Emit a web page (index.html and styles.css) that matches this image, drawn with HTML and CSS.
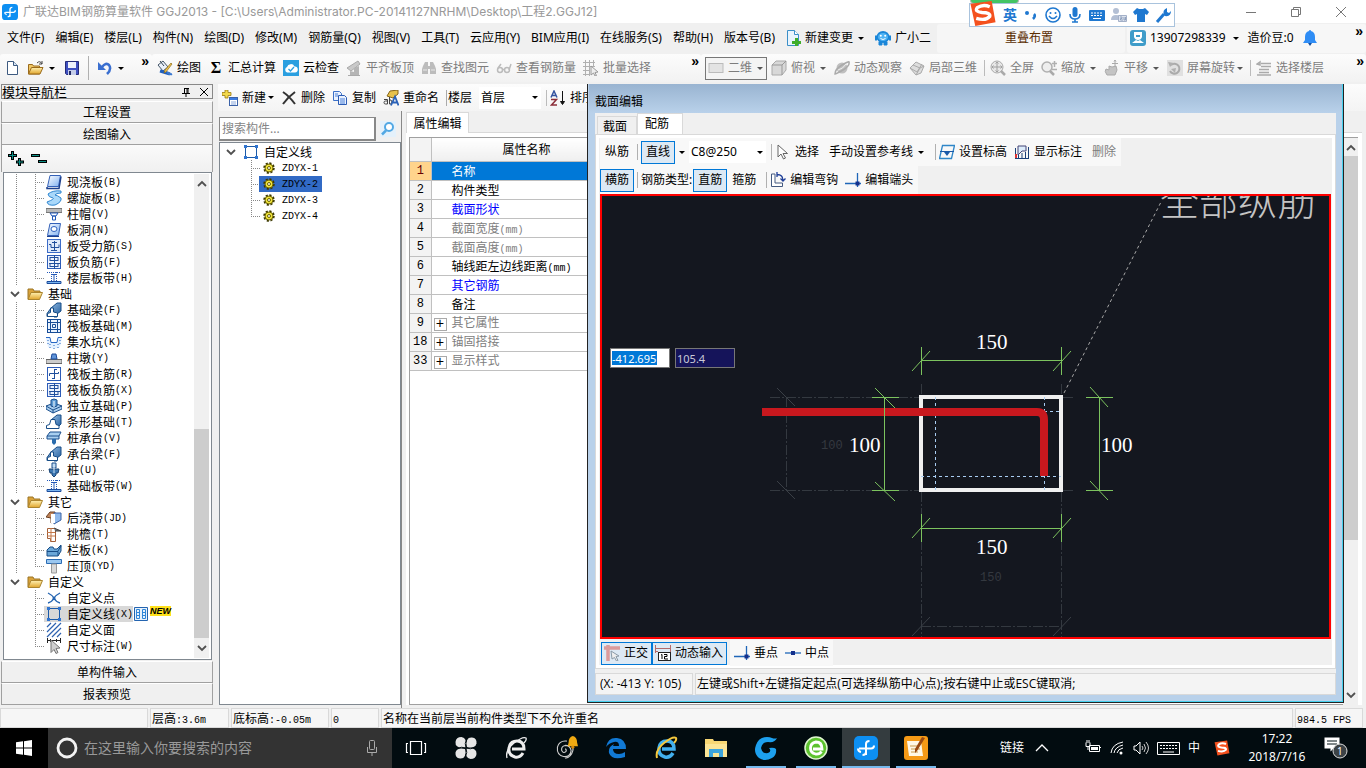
FILE: index.html
```html
<!DOCTYPE html>
<html lang="zh-CN">
<head>
<meta charset="utf-8">
<title>广联达BIM钢筋算量软件 GGJ2013</title>
<link rel="stylesheet" href="styles.css">
</head>
<body>
<svg class="defs" aria-hidden="true">
  <defs>
    <linearGradient id="gb" x1="0" y1="0" x2="1" y2="1"><stop offset="0" stop-color="#fff"/><stop offset="1" stop-color="#7fb0f0"/></linearGradient>
    <linearGradient id="gf" x1="0" y1="0" x2="0" y2="1"><stop offset="0" stop-color="#fff0b0"/><stop offset="1" stop-color="#e0a52c"/></linearGradient>
    <linearGradient id="gs" x1="0" y1="0" x2="1" y2="1"><stop offset="0" stop-color="#9ec4e8"/><stop offset="1" stop-color="#1d5a9c"/></linearGradient>
  </defs>
  <symbol id="app" viewBox="0 0 24 24"><rect width="24" height="24" rx="5" fill="#0d8ff2"/><g fill="none" stroke="#fff" stroke-width="2"><path d="M12 19V8q0-3 3.500-3M5 12.500h12q3 0 3-3M12 16q0 3-3.500 3M4 12.500q0 3 3 3.500"/></g></symbol>
  <symbol id="new" viewBox="0 0 16 16"><path d="M3.500 1.500h6l4 4v9h-10z" fill="#fff" stroke="#3d5a80"/><path d="M9.500 1.500v4h4" fill="#d8e6f6" stroke="#3d5a80"/></symbol>
  <symbol id="open" viewBox="0 0 16 16"><path d="M.5 14V4.500h4l1 1.500h6v8z" fill="#f0c766" stroke="#9a6b1c"/><path d="M.5 14l3-6.500h11.500l-3 6.500z" fill="url(#gf)" stroke="#9a6b1c"/><path d="M9 3q3-3 5 1m0-3v3h-3" fill="none" stroke="#444"/></symbol>
  <symbol id="save" viewBox="0 0 16 16"><path d="M1.500 1.500h13v13h-12l-1-1z" fill="#3e4fc0" stroke="#242b78"/><path d="M4 2h8v6H4z" fill="#eef2fb"/><path d="M4 10h8v5H4z" fill="#c5cde8"/><path d="M5 11h2v4H5z" fill="#222a66"/></symbol>
  <symbol id="undo" viewBox="0 0 16 16"><path d="M5 7q4-5 7-2 3 4-2 9" fill="none" stroke="#3a6fd0" stroke-width="2.500"/><path d="M1 2v8h8z" fill="#3a6fd0"/></symbol>
  <symbol id="draw" viewBox="0 0 16 16"><path d="M1 5l5-4 5 6-5 4z" fill="#eaf0fa" stroke="#456"/><path d="M3 1l4 5" stroke="#345" fill="none"/><path d="M3 11l10 3" stroke="#1f5fbf" stroke-width="3"/><path d="M15 4l-6 8-2 1 1-3 6-7z" fill="#f3c34a" stroke="#8a6a18" stroke-width=".7"/><path d="M10 12q3 3 5 2" stroke="#3b78d0" stroke-width="2" fill="none"/></symbol>
  <symbol id="cloud" viewBox="0 0 16 16"><rect width="16" height="16" fill="#2a9fe0"/><path d="M4 12.500a3 3 0 010-5.500 4 4 0 017.500-.5 3 3 0 01.5 6z" fill="#fff"/><path d="M5.500 9l2 2 3.500-4" fill="none" stroke="#2a9fe0" stroke-width="1.300"/></symbol>
  <symbol id="flat" viewBox="0 0 16 16"><path d="M1 8l11-7 2 3-9 7z" fill="#c9c9c9" stroke="#a9a9a9"/><path d="M4 15v-4l4 1V8l5-2v9z" fill="#b5b5b5"/><path d="M2 15.500h12" stroke="#aaa"/></symbol>
  <symbol id="find" viewBox="0 0 16 16"><g fill="#bcbcbc"><path d="M2 6l2-4h3v12H1V9zM14 6l-2-4H9v12h6V9z"/><path d="M6 6h4v3H6z"/></g><path d="M2 10h4M10 10h4" stroke="#e8e8e8"/></symbol>
  <symbol id="glasses" viewBox="0 0 16 16"><g fill="none" stroke="#bbb" stroke-width="1.500"><circle cx="4" cy="10" r="2.500"/><circle cx="11" cy="10" r="2.500"/><path d="M6.500 9.500h2M2 8l3-4M13 10l2-6"/></g></symbol>
  <symbol id="batch" viewBox="0 0 16 16"><path d="M0 2.500h12M0 6.500h12M0 10.500h7M0 14.500h7M2.500 0v16M6.500 0v16M10.500 0v6" stroke="#b0b0b0" fill="none"/><path d="M8 6l7 6-3 .5 1.500 3-1.500.5-1.500-3L8 15z" fill="#eee" stroke="#999"/></symbol>
  <symbol id="flat2d" viewBox="0 0 16 16"><rect x="1" y="3.500" width="14" height="9" fill="#e3e3e3" stroke="#bbb"/></symbol>
  <symbol id="cube" viewBox="0 0 16 16"><path d="M1 5l4-4h10v9l-4 5H1z" fill="#d8d8d8" stroke="#aaa"/><path d="M1 5h10v10M11 5l4-4" fill="none" stroke="#999"/></symbol>
  <symbol id="orbit" viewBox="0 0 16 16"><circle cx="8" cy="8" r="5.500" fill="#bfbfbf"/><path d="M1 14Q1 9 8 5t7-3q1 4-6 8t-8 4z" fill="none" stroke="#aaa" stroke-width="1.500"/><path d="M4 10q5-1 8-6" stroke="#eee" fill="none"/></symbol>
  <symbol id="part3d" viewBox="0 0 16 16"><path d="M1 8l6-6 8 4-3 7-5 2z" fill="#ddd" stroke="#aaa"/><path d="M4 5l7 3-4 7M11 8l4-2M1 8l7 4 5-8" fill="none" stroke="#aaa"/></symbol>
  <symbol id="full" viewBox="0 0 16 16"><circle cx="7" cy="7" r="6" fill="#e8e8e8" stroke="#aaa"/><path d="M11 11l4 4" stroke="#aaa" stroke-width="2.500"/><path d="M7 2v10M2 7h10M5.500 3.500L7 2l1.500 1.500M5.500 10.500L7 12l1.500-1.500M3.500 5.500L2 7l1.500 1.500M10.500 5.500L12 7l-1.500 1.500" fill="none" stroke="#a0a0a0"/></symbol>
  <symbol id="zoom" viewBox="0 0 16 16"><circle cx="6" cy="7" r="5" fill="#eee" stroke="#b0b0b0" stroke-width="1.500"/><path d="M9 11l4 4" stroke="#aaa" stroke-width="2.500"/><path d="M13.500 1v6M11 3.500h5M11 9.500h5" stroke="#b0b0b0" stroke-width="1.500"/></symbol>
  <symbol id="pan" viewBox="0 0 16 16"><path d="M3 15q-3-4-1-6l3 1V6l3 1 4-1 1 4-2 5z" fill="#c4c4c4" stroke="#aaa"/><path d="M11 0v7M8 3.500h6M10 1.500L11 0l1 1.500" stroke="#aaa" fill="none"/></symbol>
  <symbol id="rot" viewBox="0 0 16 16"><path d="M0 0h16v16H0z" fill="#e0e0e0"/><path d="M4 5a5 5 0 11-1 6" fill="none" stroke="#aaa" stroke-width="2"/><path d="M1 2l6 1-4 4zM4 9l5-1-1 5z" fill="#b0b0b0"/></symbol>
  <symbol id="floor" viewBox="0 0 16 16"><path d="M5 3.500h10M5 6.500h10M1 4l3-2v3zM3 9.500h10M3 12.500h10M1 15h14" fill="none" stroke="#aaa" stroke-width="1.500"/></symbol>
  <symbol id="change" viewBox="0 0 16 16"><path d="M2.500.5h7l4 4v11h-11z" fill="#e9f4fd" stroke="#3b8fc8"/><path d="M9.500.5v4h4" fill="#fff" stroke="#3b8fc8"/><path d="M10 8h3v3h3v3h-3v2h-3v-2H7v-3h3z" fill="#3fae2a"/></symbol>
  <symbol id="robot" viewBox="0 0 16 16"><ellipse cx="8" cy="7" rx="6.500" ry="6" fill="#1b86d8"/><path d="M0 6h2v4H0zM14 6h2v4h-2zM4 12h3v3H4zM9 12h3v3H9z" fill="#1b86d8" stroke="#1b86d8"/><ellipse cx="8" cy="7" rx="5" ry="4" fill="#50b4f4"/><path d="M5.500 8.500q2.500 2 5 0" fill="none" stroke="#fff"/><circle cx="5.800" cy="5.800" r="1" fill="#fff"/><circle cx="10.200" cy="5.800" r="1" fill="#fff"/></symbol>
  <symbol id="user" viewBox="0 0 16 16"><rect width="16" height="16" rx="3" fill="#3f9cc9"/><path d="M4 2h8v5q-1 3-4 3T4 7z" fill="#fff"/><path d="M2 13l4-3 2 1 2-1 4 3z" fill="#fff"/><path d="M6 5h4v2H6z" fill="#3f9cc9"/></symbol>
  <symbol id="bell" viewBox="0 0 16 16"><path d="M8 0q1 0 1 1 4 1 4 6v3l2 3H1l2-3V7q0-5 4-6 0-1 1-1z" fill="#2f8df5"/><path d="M6 13h4l-2 3z" fill="#154f9e"/></symbol>
  <symbol id="addnew" viewBox="0 0 16 16"><path d="M3 0h3v2.500h3v3H6V8H3V5.500H0v-3h3z" fill="#f3d94c" stroke="#9a7a10" stroke-width=".8"/><rect x="7.500" y="7.500" width="8" height="8" fill="#fff" stroke="#3b62a8"/><path d="M8 8h7v2H8z" fill="#3d7be0"/><path d="M9 12h5M9 14h5" stroke="#8aa8dc"/></symbol>
  <symbol id="del" viewBox="0 0 16 16"><path d="M2 2q6 4 12 12M14 2Q7 7 2 14" fill="none" stroke="#333" stroke-width="2"/></symbol>
  <symbol id="copy" viewBox="0 0 16 16"><path d="M1.500 1.500h6l2 2v7h-8z" fill="#eaf2ff" stroke="#3b70c8"/><path d="M6.500 5.500h6l2 2v7h-8z" fill="#eaf2ff" stroke="#2c5cb4"/><path d="M8 9h5M8 11h5M8 13h5M3 4h3M3 6h3" stroke="#4a80d8"/></symbol>
  <symbol id="lens" viewBox="0 0 16 16"><rect width="16" height="16" fill="#e4f1fb"/><circle cx="9" cy="6" r="4" fill="#fff" stroke="#52a8e4" stroke-width="2"/><path d="M6 9.500L2 13.500" stroke="#52a8e4" stroke-width="2.500"/></symbol>
  <symbol id="pin" viewBox="0 0 10 10"><path d="M3 1.500h5M3.500 1v5M7 1v5M6 1v5M1 6.500h8M5 7v3" stroke="#000" fill="none"/></symbol>
  <symbol id="x" viewBox="0 0 10 10"><path d="M1 1l8 8M9 1L1 9" stroke="#000" fill="none"/></symbol>
  <symbol id="chev" viewBox="0 0 10 10"><path d="M1 3l4 4 4-4" stroke="#505050" stroke-width="1.800" fill="none"/></symbol>
  <symbol id="folder" viewBox="0 0 16 16"><path d="M1 13V3h5l1 2h6v3" fill="#d9a23a" stroke="#9b7424"/><path d="M1 13.500L4 6.500h11.500l-3 7z" fill="url(#gf)" stroke="#ab842e"/></symbol>
  <symbol id="slab" viewBox="0 0 16 16"><path d="M4 1.500h10.500l-2 11H1.500z" fill="url(#gb)" stroke="#3461b8"/><path d="M1 13v1.500h12l2-12" fill="none" stroke="#1c3f8c" stroke-width="1.500"/></symbol>
  <symbol id="spiral" viewBox="0 0 16 16"><path d="M15 1Q7 0 2 4q0 3 5 4 2 1-6 4 1 4 8 3 7-3 6-7-4-3-6-3 1-2 6-2z" fill="#a9d8fa" stroke="#2f86d0"/></symbol>
  <symbol id="cap" viewBox="0 0 16 16"><path d="M0 2.500h16v4H0z" fill="#bbb" stroke="#777"/><path d="M4 7l2 3h4l2-3zM6.500 10h3v4h-3z" fill="#fff" stroke="#2258b8"/></symbol>
  <symbol id="hole" viewBox="0 0 16 16"><path d="M4 1.500h10.500l-2 12H1.500z" fill="url(#gb)" stroke="#3461b8"/><ellipse cx="8" cy="7" rx="3" ry="2.500" fill="#fff" stroke="#2f62c0"/><path d="M1 14.500h12" stroke="#1c3f8c"/></symbol>
  <symbol id="rebar" viewBox="0 0 16 16"><rect x="1.500" y="1.500" width="13" height="13" fill="#dfeafb" stroke="#3c6cc8"/><path d="M8.500 3v10M3 6.500h2v3h8v-3M5 12.500h6M6 4.500h5" fill="none" stroke="#204f9c"/></symbol>
  <symbol id="negbar" viewBox="0 0 16 16"><rect x="1.500" y="1.500" width="13" height="13" fill="#eef4ff" stroke="#2c5cb8"/><path d="M8.500 1v14M4 3.500h8M4 6.500h8M4 3v4M12 3v4M3 9.500h11M4 12.500h8M4 9v4M12 9v4" fill="none" stroke="#204f9c"/></symbol>
  <symbol id="strip" viewBox="0 0 16 16"><path d="M1 2.500h14M5.500 2v10M10.500 2v10" stroke="#2258b8" stroke-dasharray="1 1"/><path d="M8 4v8M6 4.500h4" stroke="#2258b8" fill="none"/><path d="M1 11.500h14v2H1z" fill="#78b4f0" stroke="#1c4c9c"/></symbol>
  <symbol id="beam" viewBox="0 0 16 16"><path d="M1 14.500v-3L5 6l6-5h4v8l-4 3v3H8v-4H6v3z" fill="url(#gs)" stroke="#174c86"/><path d="M1.500 14.500v-3l3-1V6h3v4l4 1v3.500z" fill="#fff" stroke="#174c86"/></symbol>
  <symbol id="raft" viewBox="0 0 16 16"><rect x="1.500" y="1.500" width="13" height="13" fill="#e9f3ff" stroke="#174c96"/><path d="M1 4.500h14M1 11.500h14M4.500 1v14M11.500 1v14M6.500 6.500h3v3h-3z" stroke="#174c96" fill="none"/></symbol>
  <symbol id="pit" viewBox="0 0 16 16"><path d="M0 4h4l1 5h6l1-5h4l-2 9q-6 3-12 0z" fill="#e4f1ff"/><path d="M0 3.500h4l1 5h6l1-5h4" fill="none" stroke="#2767c4"/><path d="M2 6v6M4 10v4M8 11v4M12 10v4M14 6v6" stroke="#2767c4" stroke-dasharray="1 2"/></symbol>
  <symbol id="pier" viewBox="0 0 16 16"><path d="M0 9.500h16v4H0z" fill="#ccc" stroke="#666"/><path d="M5 9l1-5h4l1 5z" fill="#5f93d8" stroke="#1c4a98"/></symbol>
  <symbol id="mainbar" viewBox="0 0 16 16"><rect x="1.500" y="1.500" width="13" height="13" fill="#fff" stroke="#2c5cb8"/><path d="M8.500 3v10M8 3.500h3M3.500 10V7.500h9V6M6 12.500h3" fill="none" stroke="#204f9c"/></symbol>
  <symbol id="iso" viewBox="0 0 16 16"><path d="M0 8l8-3 8 3v3l-9 4-7-4z" fill="#a9cdee" stroke="#1b4f8c"/><path d="M0 8l7 4 9-4M7 12v3" fill="none" stroke="#1b4f8c"/><path d="M5 8V2l3-1 3 1v6L8 9z" fill="#5d9bd4" stroke="#1b4f8c"/><path d="M8 3v6" stroke="#fff"/></symbol>
  <symbol id="stripf" viewBox="0 0 16 16"><path d="M5 6l6-5h4v9l-4 4" fill="url(#gs)" stroke="#174c86"/><path d="M.5 14.500v-3l3-1L5 5.500h4l1 5 3 1v3z" fill="#fff" stroke="#174c86"/></symbol>
  <symbol id="pilecap" viewBox="0 0 16 16"><path d="M1 6l3-4h11l-2 4v3H1z" fill="#a8cff0" stroke="#1b4f8c"/><path d="M1 6h12" stroke="#1b4f8c"/><path d="M6 9h4v4l-2 2-2-2z" fill="#2b6cac"/></symbol>
  <symbol id="pile" viewBox="0 0 16 16"><path d="M6 1h4v5H6z" fill="#c3dcf2" stroke="#1b4f8c"/><path d="M3 7h3l2 1 2-1h3l-1 4h-2v2l-2 2-2-2v-2H4z" fill="#3f7ab4" stroke="#174274"/><path d="M8 4v7" stroke="#cfe4f8"/></symbol>
  <symbol id="post" viewBox="0 0 16 16"><path d="M0 7l4-5h5v8l-4 3v-5z" fill="#c08458" stroke="#6b3f22"/><path d="M8 3h7v7l-7 4z" fill="#8fb9ec" stroke="#3a62a4"/><path d="M5 4h4v9H5z" fill="#fff"/></symbol>
  <symbol id="eave" viewBox="0 0 16 16"><path d="M1.500 2.500h8v13h-5v-3h-3z" fill="#fff" stroke="#a35f38"/><path d="M1 6.500h8M1 10h8M5 2v13" stroke="#c47848"/><path d="M8 2l7 3H9" fill="#777" stroke="#444"/></symbol>
  <symbol id="rail" viewBox="0 0 16 16"><path d="M1 8l3-3h3l1 2h3l4-4v6l-3 5H1z" fill="#6ba7d8" stroke="#174c86"/><path d="M1 9.500h11v4M12 9l3-5" fill="none" stroke="#174c86"/></symbol>
  <symbol id="coping" viewBox="0 0 16 16"><path d="M.5 1.500h15v4H.5z" fill="#9ac7f0" stroke="#2b6cb4"/><path d="M5.500 6h5v9h-5z" fill="#d9d9d9" stroke="#999"/></symbol>
  <symbol id="cpoint" viewBox="0 0 16 16"><path d="M2 3q4 2 6 5-2 4-6 5M14 3q-4 2-6 5 2 4 6 5" fill="none" stroke="#2464b0" stroke-width="1.300"/><circle cx="8" cy="8" r="1.500" fill="#2464b0"/></symbol>
  <symbol id="cline" viewBox="0 0 16 16"><rect x="2.500" y="2.500" width="11" height="11" fill="none" stroke="#1b5aa8"/><path d="M1 1h3v3H1zM12 1h3v3h-3zM1 12h3v3H1zM12 12h3v3h-3z" fill="#2f74d0"/></symbol>
  <symbol id="cface" viewBox="0 0 16 16"><path d="M1 5l4-4M1 10l9-9M1 15L15 1M6 15l9-9M11 15l4-4" stroke="#2d62b0" stroke-width="1.200"/></symbol>
  <symbol id="cdim" viewBox="0 0 16 16"><path d="M1.500 0v5M14.500 0v5M1 2.500h14M4.500 1v3M10.500 1v3" stroke="#222" fill="none"/><path d="M5 2l9 8-4 .5 2 4-2 1-2-4-3 3z" fill="#d0d0d0" stroke="#777"/></symbol>
  <symbol id="gear" viewBox="0 0 12 12"><circle cx="6" cy="6" r="4.500" fill="none" stroke="#3c3800" stroke-width="2.500" stroke-dasharray="2 1.500"/><circle cx="6" cy="6" r="4" fill="#f0e43c" stroke="#6b6200"/><circle cx="6" cy="6" r="1.500" fill="#fff" stroke="#6b6200"/></symbol>
  <symbol id="cursor" viewBox="0 0 16 16"><path d="M3 1v12l3-3 2.500 5 2-1L8 9.500h4.500z" fill="#fff" stroke="#666"/></symbol>
  <symbol id="level" viewBox="0 0 16 16"><path d="M3.500 1.500h12l-3 13h-12z" fill="none" stroke="#2f86c8" stroke-width="1.300"/><path d="M1 7.500h14" stroke="#1b5aa8"/><path d="M5 8h6l-3 4z" fill="#1b5aa8"/></symbol>
  <symbol id="mark" viewBox="0 0 16 16"><path d="M1.500 15V4M4.500 15V6M14.500 15V3M11.500 15V8M8 15V9M1 14.500h14" stroke="#1b3f78" fill="none"/><path d="M4 2h8v5H8l-4 4z" fill="#dcecfb" stroke="#447"/><path d="M1 10h2v4H1z" fill="#d33"/></symbol>
  <symbol id="hook" viewBox="0 0 16 16"><path d="M5 2H1.500v12.500h11V11H5z" fill="#fff" stroke="#445a80"/><path d="M7 2.500q6 0 6 6M10.500 6.500L13 9l2.500-2.500M7 0v5" fill="none" stroke="#1f3f98" stroke-width="1.300"/></symbol>
  <symbol id="end" viewBox="0 0 16 16"><path d="M0 11.500h16M12.500 1v14" stroke="#1f66b8" stroke-width="1.300"/><path d="M10.500 9.500h4v4h-4z" fill="#14308c"/></symbol>
  <symbol id="mid" viewBox="0 0 16 16"><path d="M0 8h16" stroke="#1f66b8" stroke-width="1.300"/><path d="M6 6h4v4H6z" fill="#14308c"/></symbol>
  <symbol id="ortho" viewBox="0 0 16 16"><path d="M0 3h16M4 0v16" stroke="#db9b9b" stroke-width="3.500"/><path d="M7 6l8 5-3 .5 2 4-1.500.5-2-3.500L8 14z" fill="#eee" stroke="#8a9aa8"/></symbol>
  <symbol id="sogou" viewBox="0 0 28 28"><path d="M1 4l22-3 4 22-21 4z" fill="#f4511e"/><path d="M21 7Q14 4 8 8q-3 4 5 5 9 0 8 4-4 5-14 2" fill="none" stroke="#fff" stroke-width="3.500"/></symbol>
</svg>

<header class="titlebar">
  <svg class="i16"><use href="#app"/></svg>
  <h1>广联达BIM钢筋算量软件 GGJ2013 - [C:\Users\Administrator.PC-20141127NRHM\Desktop\工程2.GGJ12]</h1>
  <div class="winbtns">
    <button aria-label="最小化"><svg class="i10"><path d="M0 5.500h10" stroke="#777"/></svg></button>
    <button aria-label="还原"><svg class="i10"><path d="M.5 2.500h7v7h-7zM2.500 2V.5h7v7H8" fill="none" stroke="#777"/></svg></button>
    <button aria-label="关闭"><svg class="i10"><path d="M0 0l10 10M10 0L0 10" stroke="#777"/></svg></button>
  </div>
</header>

<nav class="menubar">
  <div class="menus">
    <button>文件(F)</button><button>编辑(E)</button><button>楼层(L)</button><button>构件(N)</button><button>绘图(D)</button><button>修改(M)</button><button>钢筋量(Q)</button><button>视图(V)</button><button>工具(T)</button><button>云应用(Y)</button><button>BIM应用(I)</button><button>在线服务(S)</button><button>帮助(H)</button><button>版本号(B)</button>
    <button class="tb"><svg class="i16"><use href="#change"/></svg>新建变更<i class="dd"></i></button>
    <button class="tb"><svg class="i16"><use href="#robot"/></svg>广小二</button>
  </div>
  <button class="overlap">重叠布置</button>
  <div class="account">
    <button class="tb"><svg class="i16"><use href="#user"/></svg>13907298339<i class="dd"></i></button>
    <span>造价豆:0</span>
    <svg class="i16"><use href="#bell"/></svg>
    <button class="more" aria-label="更多">»</button>
  </div>
</nav>

<div class="toolbar">
  <div class="band file">
    <button aria-label="新建"><svg class="i16"><use href="#new"/></svg></button>
    <button class="tb" aria-label="打开"><svg class="i16"><use href="#open"/></svg><i class="dd"></i></button>
    <button aria-label="保存"><svg class="i16"><use href="#save"/></svg></button>
    <i class="sep"></i>
    <button class="tb" aria-label="撤销"><svg class="i16"><use href="#undo"/></svg><i class="dd"></i></button>
    <button class="more" aria-label="更多">»</button>
  </div>
  <div class="band draw">
    <button class="tb"><svg class="i16"><use href="#draw"/></svg>绘图</button>
    <button class="tb"><b class="sigma">Σ</b>汇总计算</button>
    <button class="tb"><svg class="i16"><use href="#cloud"/></svg>云检查</button>
    <button class="tb off"><svg class="i16"><use href="#flat"/></svg>平齐板顶</button>
    <button class="tb off"><svg class="i16"><use href="#find"/></svg>查找图元</button>
    <button class="tb off"><svg class="i16"><use href="#glasses"/></svg>查看钢筋量</button>
    <button class="tb off"><svg class="i16"><use href="#batch"/></svg>批量选择</button>
    <button class="more" aria-label="更多">»</button>
  </div>
  <div class="band view">
    <button class="tb off boxed"><svg class="i16"><use href="#flat2d"/></svg>二维<i class="dd"></i></button>
    <button class="tb off"><svg class="i16"><use href="#cube"/></svg>俯视<i class="dd"></i></button>
    <button class="tb off"><svg class="i16"><use href="#orbit"/></svg>动态观察</button>
    <button class="tb off"><svg class="i16"><use href="#part3d"/></svg>局部三维</button>
    <button class="tb off line"><svg class="i16"><use href="#full"/></svg>全屏</button>
    <button class="tb off"><svg class="i16"><use href="#zoom"/></svg>缩放<i class="dd"></i></button>
    <button class="tb off"><svg class="i16"><use href="#pan"/></svg>平移<i class="dd"></i></button>
    <button class="tb off"><svg class="i16"><use href="#rot"/></svg>屏幕旋转<i class="dd near"></i></button>
    <button class="tb off line"><svg class="i16"><use href="#floor"/></svg>选择楼层</button>
    <button class="more" aria-label="更多">»</button>
  </div>
</div>

<main class="work">
  <aside class="nav song">
    <div class="navhead"><h2>模块导航栏</h2><button aria-label="固定"><svg class="i10"><use href="#pin"/></svg></button><button aria-label="关闭"><svg class="i10"><use href="#x"/></svg></button></div>
    <button class="wide">工程设置</button>
    <button class="wide">绘图输入</button>
    <div class="expand">
      <button aria-label="全部展开"><svg class="i16"><path d="M4.500 0v9M0 4.500h9M11.500 7v8M8 11h8" stroke="#000" stroke-width="3"/><path d="M4.500 1v7M1 4.500h7M11.500 8v6M9 11h6" stroke="#0a8f86"/></svg></button>
      <button aria-label="全部折叠"><svg class="i16"><path d="M0 4.500h9M7 10.500h9" stroke="#000" stroke-width="3"/><path d="M1 4.500h7M8 10.500h7" stroke="#0a8f86"/></svg></button>
    </div>
    <div class="tree">
      <ul>
        <li class="leaf"><svg class="i16"><use href="#slab"/></svg>现浇板<s>(B)</s></li>
        <li class="leaf"><svg class="i16"><use href="#spiral"/></svg>螺旋板<s>(B)</s></li>
        <li class="leaf"><svg class="i16"><use href="#cap"/></svg>柱帽<s>(V)</s></li>
        <li class="leaf"><svg class="i16"><use href="#hole"/></svg>板洞<s>(N)</s></li>
        <li class="leaf"><svg class="i16"><use href="#rebar"/></svg>板受力筋<s>(S)</s></li>
        <li class="leaf"><svg class="i16"><use href="#negbar"/></svg>板负筋<s>(F)</s></li>
        <li class="leaf last"><svg class="i16"><use href="#strip"/></svg>楼层板带<s>(H)</s></li>
        <li class="group"><svg class="i10"><use href="#chev"/></svg><svg class="i16"><use href="#folder"/></svg>基础</li>
        <li class="leaf"><svg class="i16"><use href="#beam"/></svg>基础梁<s>(F)</s></li>
        <li class="leaf"><svg class="i16"><use href="#raft"/></svg>筏板基础<s>(M)</s></li>
        <li class="leaf"><svg class="i16"><use href="#pit"/></svg>集水坑<s>(K)</s></li>
        <li class="leaf"><svg class="i16"><use href="#pier"/></svg>柱墩<s>(Y)</s></li>
        <li class="leaf"><svg class="i16"><use href="#mainbar"/></svg>筏板主筋<s>(R)</s></li>
        <li class="leaf"><svg class="i16"><use href="#negbar"/></svg>筏板负筋<s>(X)</s></li>
        <li class="leaf"><svg class="i16"><use href="#iso"/></svg>独立基础<s>(P)</s></li>
        <li class="leaf"><svg class="i16"><use href="#stripf"/></svg>条形基础<s>(T)</s></li>
        <li class="leaf"><svg class="i16"><use href="#pilecap"/></svg>桩承台<s>(V)</s></li>
        <li class="leaf"><svg class="i16"><use href="#beam"/></svg>承台梁<s>(F)</s></li>
        <li class="leaf"><svg class="i16"><use href="#pile"/></svg>桩<s>(U)</s></li>
        <li class="leaf last"><svg class="i16"><use href="#strip"/></svg>基础板带<s>(W)</s></li>
        <li class="group"><svg class="i10"><use href="#chev"/></svg><svg class="i16"><use href="#folder"/></svg>其它</li>
        <li class="leaf"><svg class="i16"><use href="#post"/></svg>后浇带<s>(JD)</s></li>
        <li class="leaf"><svg class="i16"><use href="#eave"/></svg>挑檐<s>(T)</s></li>
        <li class="leaf"><svg class="i16"><use href="#rail"/></svg>栏板<s>(K)</s></li>
        <li class="leaf last"><svg class="i16"><use href="#coping"/></svg>压顶<s>(YD)</s></li>
        <li class="group"><svg class="i10"><use href="#chev"/></svg><svg class="i16"><use href="#folder"/></svg>自定义</li>
        <li class="leaf tail"><svg class="i16"><use href="#cpoint"/></svg>自定义点</li>
        <li class="leaf tail"><span class="hot"><svg class="i16"><use href="#cline"/></svg>自定义线<s>(X)</s></span><svg class="i16"><path d="M1.500 1.500h13v13h-13z" fill="#e8f2fc" stroke="#2464b0"/><path d="M3.500 3.500h3v9h-3zM9.500 3.500h3v9h-3zM3 6.500h4M3 9.500h4M9 6.500h4M9 9.500h4" fill="none" stroke="#2f86d8"/></svg><em>NEW</em></li>
        <li class="leaf tail"><svg class="i16"><use href="#cface"/></svg>自定义面</li>
        <li class="leaf tail last"><svg class="i16"><use href="#cdim"/></svg>尺寸标注<s>(W)</s></li>
      </ul>
      <div class="scroll low"><svg class="i10 up"><use href="#chev"/></svg><i class="thumb"></i><svg class="i10"><use href="#chev"/></svg></div>
    </div>
    <button class="wide">单构件输入</button>
    <button class="wide">报表预览</button>
  </aside>

  <section class="center">
    <div class="parts-bar">
      <button class="tb"><svg class="i16"><use href="#addnew"/></svg>新建<i class="dd near"></i></button>
      <button class="tb"><svg class="i16"><use href="#del"/></svg>删除</button>
      <button class="tb"><svg class="i16"><use href="#copy"/></svg>复制</button>
      <button class="tb"><svg class="i16"><path d="M4 6l3-5 8-1v4l-5 4z" fill="#e8c24c" stroke="#86651a"/><path d="M1 9.500h3.500V14H2.500a1.500 1.500 0 010-3h2M6.500 7v7h1.500q2-2 0-4H6.500" fill="none" stroke="#444"/><path d="M8 15.500l4-9 3.500 9M10 12.500h4" fill="none" stroke="#2b62b8" stroke-width="1.800"/></svg>重命名</button>
      <label class="floor" for="floor">楼层</label>
      <span class="pick"><select id="floor"><option>首层</option></select><i class="dd"></i></span>
      <button class="tb line"><svg class="i16"><path d="M1 7.500L4 1l3 6.500M2 5.500h4" fill="none" stroke="#3454a0" stroke-width="1.500"/><path d="M1 9.500h5.500L1.500 15H7" fill="none" stroke="#8c2f3a" stroke-width="1.500"/><path d="M12.500 1v13M10.500 11.500l2 3 2-3z" fill="#111" stroke="#111"/></svg>排序</button>
    </div>
    <div class="panes">
      <div class="parts">
        <div class="search"><input type="text" aria-label="搜索构件" placeholder="搜索构件..."><button aria-label="搜索"><svg class="i16"><use href="#lens"/></svg></button></div>
        <ul class="partlist song">
          <li class="group"><svg class="i10"><use href="#chev"/></svg><svg class="i16"><use href="#cline"/></svg>自定义线</li>
          <li class="leaf tail"><span class="cell"><svg class="i12"><use href="#gear"/></svg><s>ZDYX-1</s></span></li>
          <li class="leaf tail"><span class="cell sel"><svg class="i12"><use href="#gear"/></svg><s>ZDYX-2</s></span></li>
          <li class="leaf tail"><span class="cell"><svg class="i12"><use href="#gear"/></svg><s>ZDYX-3</s></span></li>
          <li class="leaf tail last"><span class="cell"><svg class="i12"><use href="#gear"/></svg><s>ZDYX-4</s></span></li>
        </ul>
      </div>
      <div class="props song">
        <div class="tabrow"><button class="tab on">属性编辑</button></div>
        <div class="propbody">
          <div class="grid">
            <table>
              <thead><tr><th></th><th>属性名称</th><th></th></tr></thead>
              <tbody>
                <tr class="cur"><th>1</th><td>名称</td><td></td></tr>
                <tr><th>2</th><td>构件类型</td><td></td></tr>
                <tr class="blue"><th>3</th><td>截面形状</td><td></td></tr>
                <tr class="gray"><th>4</th><td>截面宽度<s>(mm)</s></td><td></td></tr>
                <tr class="gray"><th>5</th><td>截面高度<s>(mm)</s></td><td></td></tr>
                <tr><th>6</th><td>轴线距左边线距离<s>(mm)</s></td><td></td></tr>
                <tr class="blue"><th>7</th><td>其它钢筋</td><td></td></tr>
                <tr><th>8</th><td>备注</td><td></td></tr>
                <tr class="gray fold"><th>9</th><td><button>+</button>其它属性</td><td></td></tr>
                <tr class="gray fold"><th>18</th><td><button>+</button>锚固搭接</td><td></td></tr>
                <tr class="gray fold"><th>33</th><td><button>+</button>显示样式</td><td></td></tr>
              </tbody>
            </table>
          </div>
          <div class="scroll high"><svg class="i10 up"><use href="#chev"/></svg><i class="thumb"></i><svg class="i10"><use href="#chev"/></svg></div>
        </div>
      </div>
    </div>
  </section>
</main>

<section class="dialog" role="dialog" aria-label="截面编辑">
  <h2>截面编辑</h2>
  <div class="dlgbody">
    <div class="dlgtabs song"><button>截面</button><button class="on">配筋</button></div>
    <div class="page">
      <div class="row">
        <div class="strip">
          <button class="flatb">纵筋</button><i class="sep"></i>
          <button class="pressed">直线</button><i class="dd"></i>
          <span class="pick bar"><input type="text" aria-label="钢筋规格" value="C8@250"><i class="dd"></i></span>
          <i class="sep"></i>
          <button class="tb"><svg class="i16"><use href="#cursor"/></svg>选择</button>
          <button class="tb wideg">手动设置参考线<i class="dd"></i></button>
          <i class="sep wideg"></i>
          <button class="tb"><svg class="i16"><use href="#level"/></svg>设置标高</button>
          <button class="tb"><svg class="i16"><use href="#mark"/></svg>显示标注</button>
          <button class="tb off wideg">删除</button>
        </div>
      </div>
      <div class="row">
        <div class="strip types">
          <button class="pressed">横筋</button><i class="sep"></i>
          <span>钢筋类型:</span>
          <button class="pressed">直筋</button>
          <button class="flatb">箍筋</button><i class="sep wideg"></i>
          <button class="tb"><svg class="i16"><use href="#hook"/></svg>编辑弯钩</button>
          <button class="tb"><svg class="i16"><use href="#end"/></svg>编辑端头</button>
        </div>
      </div>
      <div class="canvas">
        <svg class="cad" viewBox="602 196 727 441" preserveAspectRatio="xMinYMin slice">
          <text x="1160" y="215" font-size="39" font-weight="300" fill="#c4c4c4" font-family="Noto Sans CJK SC, sans-serif">全部纵筋</text>
          <path d="M1160.500 203L1063 395" stroke="#a8a8a8" stroke-dasharray="3 3" fill="none"/>
          <g stroke="#343940" fill="none" stroke-dasharray="10 2 2 2">
            <path d="M770 397.500h150M770 490.500h150M1063 397.500h12M1063 490.500h12M786.500 397v93"/>
            <path d="M921.500 384v12M1061.500 384v12M921.500 492v145M1061.500 492v145M921 626.500h141"/>
          </g>
          <path d="M777 388l18 18M777 481l18 18M912 636l18-19M1053 636l18-19" stroke="#3a3f46" fill="none"/>
          <text x="821" y="449" class="ghost">100</text>
          <text x="980" y="581" class="ghost">150</text>
          <rect x="921" y="397" width="140" height="93" fill="none" stroke="#f0f0f0" stroke-width="4"/>
          <g stroke="#a9cdf2" stroke-dasharray="3 3" fill="none"><path d="M935.500 397v93M1044.500 397v93M921 476.500h140M1044 411.500h18"/></g>
          <path d="M762 412h275q7 0 7 8v56" fill="none" stroke="#c8181e" stroke-width="8"/>
          <g stroke="#7cc35e" fill="none">
            <path d="M921 360.500h141M921.500 347v28M1061.500 347v28M912 371l18-20M1053 371l18-20"/>
            <path d="M921 528.500h141M921.500 514v28M1061.500 514v28M912 538l18-20M1053 538l18-20"/>
            <path d="M884.500 397v94M872 397.500h27M872 490.500h27M875 388l20 20M875 482l20 19"/>
            <path d="M1099.500 397v94M1086 397.500h27M1086 490.500h27M1090 387l18 20M1090 481l18 19"/>
          </g>
          <g class="dim"><text x="976" y="349">150</text><text x="976" y="554">150</text><text x="849" y="452">100</text><text x="1101" y="452">100</text></g>
        </svg>
        <input class="coord first" aria-label="X" value="-412.695">
        <input class="coord second" aria-label="Y" value="105.4">
      </div>
      <div class="row foot">
        <button class="pressed tb"><svg class="i16"><use href="#ortho"/></svg>正交</button><button class="pressed tb"><svg class="i16"><path d="M.5 0v8M15.500 0v8M1 3.500h14M1 6.500h2" stroke="#b26a6a" fill="none"/><rect x="3.500" y="7.500" width="12" height="8" fill="#fff" stroke="#222"/><path d="M6 10l1-.5V14M9 9.500h3v2H9.500V14H13" stroke="#000" fill="none"/></svg>动态输入</button>
        <div class="strip">
          <button class="tb"><svg class="i16"><use href="#end"/></svg>垂点</button>
          <button class="tb"><svg class="i16"><use href="#mid"/></svg>中点</button>
        </div>
      </div>
    </div>
    <div class="dlgstatus"><span>(X: -413 Y: 105)</span><span>左键或Shift+左键指定起点(可选择纵筋中心点);按右键中止或ESC键取消;</span></div>
  </div>
</section>

<div class="ime">
  <svg class="logo"><use href="#sogou"/></svg>
  <b>英</b>
  <svg class="i16"><circle cx="4" cy="6" r="2" fill="#1f78d0"/><path d="M11 7q2 2-1 5" fill="none" stroke="#1f78d0" stroke-width="2.500"/></svg>
  <svg class="i16"><circle cx="8" cy="8" r="7" fill="none" stroke="#1f78d0" stroke-width="1.600"/><circle cx="5.500" cy="6" r="1" fill="#1f78d0"/><circle cx="10.500" cy="6" r="1" fill="#1f78d0"/><path d="M4 9q4 5 8 0" fill="none" stroke="#1f78d0" stroke-width="1.500"/></svg>
  <svg class="i16"><rect x="5.500" y="0" width="5" height="10" rx="2.500" fill="#1f78d0"/><path d="M3 7q0 5 5 5t5-5M8 12v3M5 15h6" fill="none" stroke="#1f78d0" stroke-width="1.600"/></svg>
  <svg class="i16"><rect x="0" y="3" width="16" height="11" rx="1" fill="#1f78d0"/><path d="M2 6h12M2 8.500h12" stroke="#fff" stroke-dasharray="2 1"/><path d="M4 11.500h8" stroke="#fff"/></svg>
  <svg class="i16"><circle cx="5" cy="4" r="3" fill="#b3bfd4"/><path d="M0 13q0-5 5-5t5 5z" fill="#b3bfd4"/><path d="M7.500 8.500h8v6h-8z" fill="#dde3ee" stroke="#a3b0c8"/><path d="M9 10h2v1.500H9.500V13H12M13 10v3h1.500v-3" fill="none" stroke="#8fa0bd"/></svg>
  <svg class="i16"><path d="M4 1l2 1h4l2-1 4 4-2 3-2-1v8H4V7L2 8 0 5z" fill="#1f78d0"/></svg>
  <svg class="i16"><path d="M2 15l7-8" stroke="#1f78d0" stroke-width="3"/><path d="M9 8Q7 3 12 1v4l2 1 2-2q0 6-6 5z" fill="#1f78d0"/></svg>
</div>
<i class="float" aria-hidden="true"></i>

<footer class="status song"><span></span><span>层高<s>:3.6m</s></span><span>底标高<s>:-0.05m</s></span><span><s>0</s></span><span>名称在当前层当前构件类型下不允许重名</span><span><s>984.5 FPS</s></span></footer>

<div class="taskbar">
  <button class="start" aria-label="开始"><svg class="i16"><path d="M0 2.200L7 1.300v6.200H0zM8 1.200L16 0v7.500H8zM0 8.500h7v6.200l-7-1zM8 8.500h8V16l-8-1.200z" fill="#fff"/></svg></button>
  <label class="cortana"><svg viewBox="0 0 22 22"><circle cx="11" cy="11" r="9" fill="none" stroke="#f2f2f2" stroke-width="2.800"/></svg><input type="text" aria-label="搜索" placeholder="在这里输入你要搜索的内容"><svg class="i16"><rect x="5.500" y=".5" width="5" height="9" rx="1" fill="none" stroke="#aaa"/><path d="M3.500 7v5.500h9V7M8 12v4" fill="none" stroke="#aaa"/></svg></label>
  <div class="apps">
    <button aria-label="任务视图"><svg viewBox="0 0 24 24"><path d="M6.500 5.500h11v13h-11zM4 7.500H2.500v9H4M20 7.500h1.500v9H20" fill="none" stroke="#fff" stroke-width="1.200"/></svg></button>
    <button aria-label="风扇"><svg viewBox="0 0 24 24"><g fill="#e6e6e6"><path d="M12 11.500Q1 13 1.500 6q.5-5 6-5 6 1 4.500 10.500z"/><path d="M13 11Q11 1 18 1.500q5 .5 4.500 6Q21 13 13 11z"/><path d="M12 12.500Q23 11 22.500 18q-.5 5-6 5-6-1-4.500-10.500z"/><path d="M11 13Q13 23 6 22.500q-5-.5-4.500-6Q3 11 11 13z"/></g><path d="M2 13q6-3 10-1t10-1M13 2q-3 6-1 10t-1 10" fill="none" stroke="#020c10"/></svg></button>
    <button aria-label="浏览器"><svg viewBox="0 0 24 24"><path d="M19 17q-3 5-8 4-7-2-6-9 1-7 8-7t7 8H8" fill="none" stroke="#eee" stroke-width="3"/><path d="M3 22q-2-8 7-15T22 2q1 2-2 5" fill="none" stroke="#eee" stroke-width="1.300"/></svg></button>
    <button aria-label="提醒"><svg viewBox="0 0 28 28"><path d="M15 6q-9-1-11 7-1 9 7 11 8 1 9-7-1-6-7-6-5 1-4 6 2 4 5 1 1-2-1-3M18 8q5 4 4 9-2 8-9 9" fill="none" stroke="#ccc" stroke-width="1.300"/><path d="M22 0q5 1 5 8l1 4H16l1-4q0-7 5-8z" fill="#f0aa12"/><circle cx="22" cy="13" r="1.800" fill="#d88b0a"/></svg></button>
    <button aria-label="Edge"><svg viewBox="0 0 24 24"><path d="M2 11Q4 1 13 2q9 1 9 11H9q0 5 6 5 3 0 6-2v5q-13 4-16-4-1-6 5-9-1 2-1 2h6q0-5-5-4-5 1-8 5z" fill="#1179d4"/></svg></button>
    <button aria-label="Internet Explorer"><svg viewBox="0 0 24 24"><path d="M19 17q-3 5-8 4-7-2-6-9 1-7 8-7t7 8H8" fill="none" stroke="#42b0ee" stroke-width="3.500"/><path d="M3 22q-2-8 7-15T22 2q1 2-2 5" fill="none" stroke="#f5c93e" stroke-width="2"/></svg></button>
    <button aria-label="文件资源管理器"><svg viewBox="0 0 24 24"><path d="M1 3h8l1 2h13v16H1z" fill="#f7d774"/><path d="M1 8h22v13H1z" fill="#fbe596"/><path d="M5 13h14v8h-4v-4H9v4H5z" fill="#3ca4dc"/></svg></button>
    <button class="run" aria-label="广联达"><svg viewBox="0 0 24 24"><path d="M23 2q-2 5-9 4-6 0-7 6 1 6 7 5 4-2 1-5 5-1 7 1 1 6-4 9-7 4-13 0Q-1 17 2 9 5 1 13 1q3 0 5 1 3 1 5 0z" fill="#1da0ee"/></svg></button>
    <button class="run" aria-label="360浏览器"><svg viewBox="0 0 24 24"><circle cx="12" cy="12" r="11" fill="#5cc22e" stroke="#dff5d0" stroke-width="1.500"/><path d="M17.500 15.500q-2 3-6 2.500-5-1-5-6 0-5 5.500-6 6 0 6 7H9" fill="none" stroke="#fff" stroke-width="2.800"/></svg></button>
    <button class="run active" aria-label="GGJ2013"><svg><use href="#app"/></svg></button>
    <button class="run" aria-label="笔记"><svg viewBox="0 0 24 24"><rect width="24" height="24" rx="3" fill="#f59a16"/><path d="M3 5h14l2 15H5z" fill="#fff8e6"/><path d="M6 10h9M7 13h9M7 16h7" stroke="#c99a4a"/><path d="M21 2l-8 13-2 2v-4l7-12z" fill="#9a4a12"/></svg></button>
  </div>
  <div class="tray">
    <span>链接</span>
    <svg class="i16"><path d="M2 11l6-6 6 6" fill="none" stroke="#fff" stroke-width="1.300"/></svg>
    <svg class="i16 far"><path d="M4.500 5.500h10v6h-10zM14.500 7.500H16M1 2.500v4h4v-4M2 0v3M4 0v3M3 7v3" fill="none" stroke="#fff"/><path d="M6 7h7v3H6z" fill="#fff"/></svg>
    <svg class="i16"><g fill="none" stroke="#fff"><path d="M2 13Q3 4 14 2M5 13q1-6 9-8M8 13q1-4 6-5"/></g><circle cx="12" cy="13" r="1.500" fill="#fff"/></svg>
    <svg class="i16"><path d="M1 6h2l4-4v12l-4-4H1z" fill="none" stroke="#fff"/><path d="M9 6q2 2 0 4M11 4q3 4 0 8M13 2q5 6 0 12" fill="none" stroke="#ccc"/></svg>
    <svg class="kbd"><path d="M.5 1.500h22v12H.5z" fill="none" stroke="#fff"/><path d="M3 4.500h17M3 7.500h17" stroke="#fff" stroke-dasharray="2 1"/><path d="M6 11h11" stroke="#fff"/></svg>
    <span>中</span>
    <svg class="i16 sg"><use href="#sogou"/></svg>
    <time>17:22<br>2018/7/16</time>
    <svg class="note"><path d="M.5 1.500h15v11h-6l-3 3v-3h-6z" fill="#fff"/><path d="M3 5h10M3 8h10" stroke="#001015"/><circle cx="16" cy="15" r="7" fill="#3c4346" stroke="#ddd"/><text x="13" y="19" font-size="10" fill="#fff">1</text></svg>
  </div>
</div>
</body>
</html>
```

FILE: styles.css
```css
* { box-sizing: border-box; }
body {
  margin: 0; height: 100vh; display: flex; flex-direction: column; overflow: hidden; position: relative;
  background: #f0f0f0; color: #000; font: 12px/16px "Noto Sans", "Noto Sans CJK SC", sans-serif;
}
.defs { position: absolute; width: 0; height: 0; }
button { font: inherit; color: inherit; background: none; border: 0; padding: 0; margin: 0; white-space: nowrap; }
input, select { font: inherit; border: 0; padding: 0; margin: 0; min-width: 0; border-radius: 0; outline: 0; }
ul { list-style: none; margin: 0; padding: 0; }
h1, h2 { margin: 0; font: inherit; }
svg { display: block; flex: none; }
.i16 { width: 16px; height: 16px; }
.i12 { width: 12px; height: 12px; }
.i10 { width: 10px; height: 10px; }
.song { font-family: "Noto Sans CJK SC", sans-serif; }
s { text-decoration: none; font: 10px "Liberation Mono", monospace; }
.tb { display: flex; align-items: center; gap: 4px; }
.off { color: #7d7d7d; }
.dd { flex: none; width: 6px; height: 3px; margin: 0 1px; border: solid transparent; border-width: 3px 3px 0; border-top-color: #000; }
.off .dd { border-top-color: #555; }
.dd.near { margin: 0 0 0 -2px; }
.sep { width: 1px; height: 16px; background: #b0b0b0; flex: none; }
.more { font: bold 14px/12px "Liberation Sans", sans-serif; margin-left: auto; align-self: flex-start; padding-top: 1px; }

/* title bar */
.titlebar { display: flex; align-items: center; gap: 5px; height: 23px; padding-left: 2px; background: #fff; flex: none; }
.titlebar h1 { color: #999; white-space: nowrap; font-family: Inter, "Noto Sans CJK SC", sans-serif; }
.winbtns { margin-left: auto; display: flex; gap: 35px; padding-right: 20px; }

/* menus */
.menubar { height: 30px; flex: none; display: flex; align-items: center; }
.menus { display: flex; align-items: center; gap: 11px; padding-left: 7px; width: 937px; white-space: nowrap; }
.menus .tb { margin-left: -1px; }
.overlap { width: 188px; height: 29px; padding-right: 4px; background: #f6f6f6; color: #5a2d00; border-radius: 3px; }
.account { flex: 1; height: 29px; margin-left: 2px; padding: 0 3px; display: flex; align-items: center; gap: 8px; background: #f7f7f7; border-radius: 3px; white-space: nowrap; }
.account .dd { margin-left: 3px; }

/* toolbars */
.toolbar { display: flex; height: 28px; flex: none; margin-top: 1px; }
.band { display: flex; align-items: center; gap: 7px; padding: 0 2px; background: linear-gradient(#fcfcfc, #f2f2f2); border-radius: 3px; }
.file { width: 152px; padding: 0 3px 0 4px; gap: 8px; }
.file .sep { height: 24px; }
.draw { width: 549px; padding-left: 5px; }
.view { flex: 1; padding-left: 4px; }
.sigma { width: 16px; font: bold 16px/16px "Liberation Serif", serif; text-align: center; }
.boxed { border: 1px solid #777; height: 23px; width: 62px; padding: 0 2px; margin-right: -3px; background: #f4f4f4; }
.boxed .dd { margin-left: auto; }
.line { border-left: 1px solid #bbb; padding-left: 5px; height: 16px; }

.work { flex: 1; min-height: 0; display: flex; gap: 5px; padding-top: 2px; }

/* navigation panel */
.nav { width: 213px; display: flex; flex-direction: column; padding: 0 0 3px 1px; }
.navhead { height: 15px; border: 1px solid #888; display: flex; align-items: center; gap: 8px; padding-right: 3px; margin-bottom: 2px; flex: none; }
.navhead h2 { margin-right: auto; font-size: 13px; line-height: 13px; }
.wide { height: 22px; border: 1px solid #a0a0a0; border-top-color: #fff; flex: none; background: #f0f0f0; }
.expand { height: 27px; flex: none; display: flex; align-items: center; gap: 7px; padding-left: 6px; background: linear-gradient(#fafafa, #f0f0f0); border: 1px solid #a0a0a0; border-width: 0 1px; }
.tree { flex: 1; min-height: 0; display: flex; justify-content: space-between; margin: 0 1px 1px 2px; padding: 1px 2px 1px 0; background: #fff; border: 1px solid #808890; overflow: hidden; }
.tree ul { flex: 1; }
li { display: flex; align-items: center; height: 16px; line-height: 16px; white-space: nowrap; }
.group { padding-left: 6px; gap: 5px; }
.group .i10 { margin-right: 2px; }
.leaf { padding-left: 42px; gap: 5px; background:
  repeating-linear-gradient(90deg, #888 0 1px, transparent 1px 2px) 31px 8px / 10px 1px no-repeat,
  repeating-linear-gradient(#888 0 1px, transparent 1px 2px) 31px 0 / 1px 16px no-repeat,
  repeating-linear-gradient(#888 0 1px, transparent 1px 2px) 12px 0 / 1px 16px no-repeat; }
.leaf.last { background-size: 10px 1px, 1px 8px, 1px 16px; }
.leaf.tail { background-size: 10px 1px, 1px 16px, 0 0; }
.leaf.tail.last { background-size: 10px 1px, 1px 8px, 0 0; }
.leaf s, .hot s { margin-left: -5px; }
.hot { display: flex; align-items: center; gap: 5px; background: #d8d8d8; margin-left: -2px; padding-left: 2px; height: 16px; }
.hot + svg { margin-left: -5px; }
.leaf em { font: italic bold 9px/10px "Liberation Sans", sans-serif; background: #ffe11c; margin: 0 0 6px -4px; }
.scroll { width: 15px; background: #f0f0f0; display: flex; flex-direction: column; align-items: center; padding: 5px 0; flex: none; }
.up { transform: rotate(180deg); }
.thumb { width: 100%; background: #cdcdcd; }
.low .thumb { height: 44%; margin-top: auto; margin-bottom: 5px; }
.high .thumb { height: 69%; margin: 3px 0 auto; }

/* component list and property grid */
.center { flex: 1; min-width: 0; display: flex; flex-direction: column; }
.parts-bar { height: 27px; flex: none; display: flex; align-items: center; gap: 7px; padding-left: 4px; background: linear-gradient(#fcfcfc, #f4f4f4); }
.floor { border-left: 1px solid #aaa; padding-left: 1px; }
.pick { display: flex; align-items: center; background: #fff; height: 22px; width: 62px; padding: 0 2px; }
.pick select, .pick input { flex: 1; width: 0; appearance: none; background: #fff; color: #000; }
.parts-bar .line { margin-left: -2px; padding-left: 3px; }
.panes { flex: 1; min-height: 0; display: flex; gap: 4px; }
.parts { width: 184px; display: flex; flex-direction: column; padding: 4px 0 3px 1px; border-right: 1px solid #888; }
.search { display: flex; align-items: center; gap: 4px; height: 27px; flex: none; }
.search input { height: 24px; width: 157px; border: 2px solid #888; border-width: 1px 2px 2px 1px; padding-left: 2px; background: #fff; }
.search input::placeholder { color: #858585; opacity: 1; }
.partlist { flex: 1; background: #fff; border: 1px solid #808890; padding-top: 1px; }
.partlist .leaf { padding-left: 39px; }
.cell { display: flex; align-items: center; height: 16px; padding: 0 4px; gap: 12px; }
.cell s { margin-left: -5px; }
.sel { background: #316ac5; }
.props { flex: 1; min-width: 0; display: flex; flex-direction: column; padding: 1px 4px 3px 0; }
.tabrow { height: 21px; display: flex; flex: none; border-bottom: 1px solid #d9d9d9; }
.tab { width: 63px; border: 1px solid #d9d9d9; border-bottom: 0; background: #fff; margin-bottom: -1px; }
.propbody { flex: 1; min-height: 0; display: flex; padding: 4px 4px 0 3px; background: #fff; }
.grid { flex: 1; border: 1px solid #a0a0a0; border-right: 0; overflow: hidden; }
table { border-collapse: collapse; width: 100%; table-layout: fixed; }
th, td { height: 19px; padding: 0; border: 1px solid #c0c0c0; border-width: 0 1px 1px 0; line-height: 16px; text-align: left; font-weight: 400; white-space: nowrap; }
td { padding-left: 20px; }
thead th { height: 23px; text-align: center; background: linear-gradient(#fff, #efefef); }
tr th:first-child { width: 21px; text-align: center; background: #f3f3f3; }
tr th:nth-child(2) { width: 191px; }
tbody th { font: 12px "Liberation Mono", monospace; }
.cur td { background: #0078d7; color: #fff; }
tbody .cur th:first-child { background: #ffd48c; color: #600; }
.blue td { color: #00f; }
.gray td { color: #808080; }
.fold td { padding-left: 2px; }
.fold button { width: 13px; height: 13px; border: 1px solid #aaa; color: #000; font: 14px/10px "Liberation Mono", monospace; margin-right: 5px; vertical-align: middle; }
.grid + .scroll { border-top: 1px solid #a0a0a0; }

/* section editor window */
.dialog { position: absolute; inset: 84px 22px 65px 587px; display: flex; flex-direction: column; background: #b9d1ea; border: 1px solid #222; border-top: 0; box-shadow: inset -1px -1px #45d0ee; padding: 0 7px 7px; }
.dialog h2 { height: 29px; flex: none; margin: 0 -6px; padding: 10px 6px 0; background: linear-gradient(#99b4d1, #b9d1ea); }
.dlgbody { flex: 1; min-height: 0; display: flex; flex-direction: column; background: #f0f0f0; }
.dlgtabs { display: flex; align-items: flex-end; padding-left: 2px; height: 21px; flex: none; }
.dlgtabs button { width: 40px; height: 18px; border: 1px solid #d9d9d9; border-bottom: 0; padding-right: 4px; }
.dlgtabs .on { width: 46px; height: 21px; background: #fff; padding: 0 6px 2px 0; }
.page { flex: 1; min-height: 0; display: flex; flex-direction: column; background: #f0f0f0; border: 1px solid #d9d9d9; box-shadow: inset 0 0 0 3px #fff; padding: 3px 4px 1px 4px; }
.row { display: flex; height: 28px; flex: none; }
.strip { display: flex; align-items: center; gap: 3px; background: #f8f8f8; padding-right: 5px; }
.strip > .tb + .tb { margin-left: 4px; }
.strip .wideg, .strip > .tb + .wideg { margin-left: 7px; }
.flatb { padding: 0 5px; }
.pressed { height: 23px; padding: 0 4px; border: 1px solid #0078d7; background: #dde9f4; }
.pick.bar { width: 77px; }
.bar + .sep { margin-left: 2px; }
.types .flatb { padding: 0 2px; }
.types span { margin-right: -2px; }
.types .wideg { margin-left: 5px; }
.canvas { flex: 1; min-height: 0; border: 2px solid #f00; background: #14171f; position: relative; overflow: hidden; }
.cad { width: 100%; height: 100%; }
.ghost { font: 12px "Liberation Mono", monospace; fill: #343940; }
.dim { font: 21px "Liberation Serif", serif; fill: #fff; }
.coord { position: absolute; top: 152px; width: 60px; height: 20px; border: 1px solid #777; font: 11px "Noto Sans", sans-serif; padding: 0 1px; }
.first { left: 8px; color: #fff; background: linear-gradient(#0078d7, #0078d7) 1px 2px / 45px 14px no-repeat #fff; }
.second { left: 73px; color: #c9c9d8; background: #15145a; }
.foot { align-items: center; padding-left: 1px; }
.foot .pressed { padding: 0 3px 0 2px; }
.foot .strip { padding: 0 4px; margin-left: 3px; height: 26px; }
.dlgstatus { display: flex; gap: 2px; height: 22px; flex: none; margin-top: 4px; font-family: "Open Sans", "Noto Sans CJK SC", sans-serif; }
.dlgstatus span { border: 1px solid #d9d9d9; padding: 2px 1px; background: #f4f4f4; white-space: nowrap; }
.dlgstatus span:first-child { width: 98px; padding-left: 4px; }
.dlgstatus span:last-child { flex: 1; }

/* input method bar */
.ime { position: absolute; z-index: 2; left: 969px; top: 3px; width: 206px; height: 24px; display: flex; align-items: center; gap: 6px; background: #fff; border: 1px solid #a9c3dd; }
.ime .logo { width: 28px; height: 27px; margin: -4px 0 0 -1px; }
.ime b { color: #1f78d0; font-size: 14px; }
.float { position: absolute; left: 970px; top: 0; width: 49px; height: 4px; background: #43c463; border: 1px solid #b5b5b5; border-top: 0; border-radius: 0 0 20px 20px; }

/* status bar */
.status { display: flex; gap: 2px; height: 20px; flex: none; }
.status span { border: 1px solid #d9d9d9; background: #f6f6f6; padding: 1px; white-space: nowrap; }
.status span:nth-child(1) { width: 148px; }
.status span:nth-child(2) { width: 79px; }
.status span:nth-child(3) { width: 98px; }
.status span:nth-child(4) { width: 48px; }
.status span:nth-child(5) { flex: 1; }
.status span:nth-child(6) { width: 68px; margin-right: 3px; }

/* taskbar */
.taskbar { display: flex; height: 40px; flex: none; background: #020c10; color: #fff; }
.start { width: 48px; display: grid; place-items: center; background: #000; }
.cortana { width: 344px; background: #333; display: flex; align-items: center; gap: 6px; padding: 0 12px 0 8px; }
.cortana svg:first-child { width: 22px; height: 22px; }
.cortana input { flex: 1; background: none; font-size: 14px; color: #fff; }
.cortana input::placeholder { color: #999; opacity: 1; }
.apps { display: flex; gap: 2px; }
.apps button { width: 48px; display: grid; place-items: center; }
.apps svg { width: 24px; height: 24px; }
.run { background: linear-gradient(#76b9ed, #76b9ed) 50% 100% / 40px 2px no-repeat; }
.apps .active { background: linear-gradient(#76b9ed, #76b9ed) 50% 100% / 48px 2px no-repeat #343c3f; }
.tray { margin-left: auto; display: flex; align-items: center; gap: 8px; padding-right: 18px; }
.tray span:first-child { margin-right: 2px; }
.far { margin-left: 27px; }
.kbd { width: 23px; height: 15px; }
.sg { margin-left: 6px; }
.tray time { width: 66px; text-align: center; line-height: 18px; margin-left: 6px; }
.note { width: 24px; height: 24px; margin-left: 6px; }
```
